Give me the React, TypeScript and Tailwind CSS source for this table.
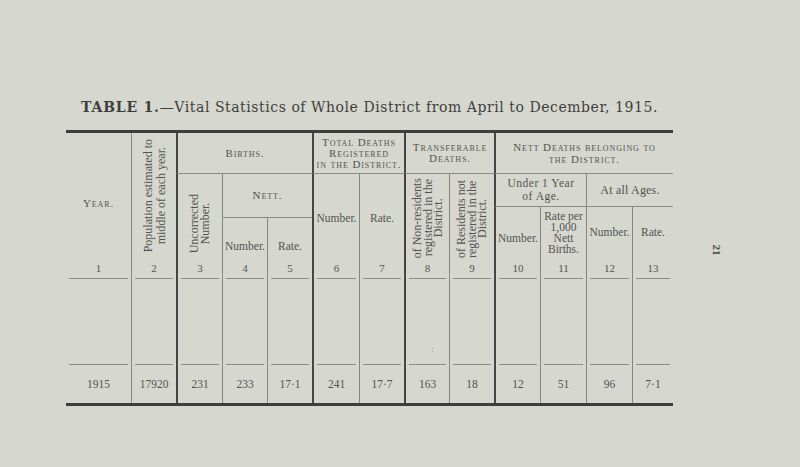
import * as React from "react";

const thin = "border-l border-l-[#868782]";
const thick = "border-l-2 border-l-[#454643]";
const rule = "h-px bg-[#8a8b86]";

const colLeft = [
  "",
  thin,
  thick,
  thin,
  thin,
  thick,
  thin,
  thick,
  thin,
  thick,
  thin,
  thin,
  thin,
];

const colStart = [
  "col-start-1",
  "col-start-2",
  "col-start-3",
  "col-start-4",
  "col-start-5",
  "col-start-6",
  "col-start-7",
  "col-start-8",
  "col-start-9",
  "col-start-10",
  "col-start-11",
  "col-start-12",
  "col-start-13",
];

const values = ["1915", "17920", "231", "233", "17·1", "241", "17·7", "163", "18", "12", "51", "96", "7·1"];

function Caps({ children, className = "" }: { children: React.ReactNode; className?: string }) {
  return (
    <div className={`text-center text-[11px] leading-[11px] tracking-[0.9px] [font-variant-caps:small-caps] ${className}`}>
      {children}
    </div>
  );
}

function Sideways({ children, className = "" }: { children: React.ReactNode; className?: string }) {
  return (
    <div className={`whitespace-nowrap text-center text-[12px] [writing-mode:vertical-rl] rotate-180 ${className}`}>
      {children}
    </div>
  );
}

export default function App() {
  return (
    <div className="flex h-[467px] w-full bg-[#d6d7cf] pl-[66px] pt-[97px] font-['Liberation_Serif',serif] text-[#52544f]">
      <div className="w-[607px]">
        <h1 className="mb-[13px] h-[20px] whitespace-nowrap text-center font-['DejaVu_Serif',serif] text-[14px] leading-[20px] tracking-[0.55px] text-[#3e3f3c]">
          <span className="font-bold tracking-[0.8px]">TABLE 1.</span>
          <span>—Vital Statistics of Whole District from April to December, 1915.</span>
        </h1>

        <div className="grid grid-cols-[65px_45px_46px_45px_45px_47px_45px_45px_45px_46px_46px_46px_41px] grid-rows-[41px_33px_11px_40px_21px_86px_38px] border-y-[3px] border-y-[#3c3d3a] text-[11.5px]">
          {/* header */}
          <div className="col-start-1 row-start-1 row-span-4 flex items-center justify-center pt-4">
            <Caps className="tracking-[0.5px]">Year.</Caps>
          </div>
          <div className={`col-start-2 row-start-1 row-span-4 flex items-center justify-center pl-[2px] ${thin}`}>
            <Sideways className="leading-[13px]">
              Population estimated to
              <br />
              middle of each year.
            </Sideways>
          </div>

          <div className={`col-start-3 col-span-3 row-start-1 flex items-center justify-center border-b border-b-[#8a8b86] ${thick}`}>
            <Caps>Births.</Caps>
          </div>
          <div className={`col-start-3 row-start-2 row-span-3 flex items-center justify-center pt-4 ${thick}`}>
            <Sideways className="leading-[11px]">
              Uncorrected
              <br />
              Number.
            </Sideways>
          </div>
          <div className={`col-start-4 col-span-2 row-start-2 row-span-2 flex items-center justify-center border-b border-b-[#8a8b86] ${thin}`}>
            <Caps>Nett.</Caps>
          </div>
          <div className={`col-start-4 row-start-4 flex items-end justify-center pb-[5px] leading-[13px] ${thin}`}>Number.</div>
          <div className={`col-start-5 row-start-4 flex items-end justify-center pb-[5px] leading-[13px] ${thin}`}>Rate.</div>

          <div className={`col-start-6 col-span-2 row-start-1 flex items-center justify-center border-b border-b-[#8a8b86] ${thick}`}>
            <Caps>
              Total Deaths
              <br />
              Registered
              <br />
              in the District.
            </Caps>
          </div>
          <div className={`col-start-6 row-start-2 row-span-3 flex items-center justify-center pt-[6px] ${thick}`}>Number.</div>
          <div className={`col-start-7 row-start-2 row-span-3 flex items-center justify-center pt-[6px] ${thin}`}>Rate.</div>

          <div className={`col-start-8 col-span-2 row-start-1 flex items-center justify-center border-b border-b-[#8a8b86] ${thick}`}>
            <Caps>
              Transferable
              <br />
              Deaths.
            </Caps>
          </div>
          <div className={`col-start-8 row-start-2 row-span-3 flex items-center justify-center pt-[5px] ${thick}`}>
            <Sideways className="leading-[10.5px]">
              of Non-residents
              <br />
              registered in the
              <br />
              District.
            </Sideways>
          </div>
          <div className={`col-start-9 row-start-2 row-span-3 flex items-center justify-center pt-[5px] ${thin}`}>
            <Sideways className="leading-[10.5px]">
              of Residents not
              <br />
              registered in the
              <br />
              District.
            </Sideways>
          </div>

          <div className={`col-start-10 col-span-4 row-start-1 flex items-center justify-center border-b border-b-[#8a8b86] ${thick}`}>
            <Caps className="leading-[12px]">
              Nett Deaths belonging to
              <br />
              the District.
            </Caps>
          </div>
          <div className={`col-start-10 col-span-2 row-start-2 flex items-center justify-center border-b border-b-[#8a8b86] text-center text-[11.5px] leading-[13.5px] tracking-[0.5px] ${thick}`}>
            Under 1 Year
            <br />
            of Age.
          </div>
          <div className={`col-start-12 col-span-2 row-start-2 flex items-center justify-center border-b border-b-[#8a8b86] text-[12px] tracking-[0.2px] ${thin}`}>
            At all Ages.
          </div>
          <div className={`col-start-10 row-start-3 row-span-2 flex items-center justify-center pt-[12px] ${thick}`}>Number.</div>
          <div className={`col-start-11 row-start-3 row-span-2 flex items-center justify-center text-center leading-[11px] ${thin}`}>
            Rate per
            <br />
            1,000
            <br />
            Nett
            <br />
            Births.
          </div>
          <div className={`col-start-12 row-start-3 row-span-2 flex items-center justify-center ${thin}`}>Number.</div>
          <div className={`col-start-13 row-start-3 row-span-2 flex items-center justify-center ${thin}`}>Rate.</div>

          {/* column numbers */}
          {values.map((_, i) => (
            <div key={`n${i}`} className={`row-start-5 flex flex-col justify-end ${colStart[i]} ${colLeft[i]}`}>
              <div className="text-center text-[11px] leading-[13px]">{i + 1}</div>
              <div className={`mx-[3px] mt-[3px] ${rule}`} />
            </div>
          ))}

          {/* empty body */}
          {values.map((_, i) => (
            <div key={`e${i}`} className={`row-start-6 flex flex-col items-center justify-end ${colStart[i]} ${colLeft[i]}`}>
              {i === 7 && <span className="mb-[10px] ml-[10px] text-[9px] leading-[9px] text-[#8a8b86]">:</span>}
              <div className={`mx-[3px] self-stretch ${rule}`} />
            </div>
          ))}

          {/* data */}
          {values.map((v, i) => (
            <div key={`d${i}`} className={`row-start-7 flex items-center justify-center pt-[2px] ${colStart[i]} ${colLeft[i]}`}>
              {v}
            </div>
          ))}
        </div>
      </div>

      <div className="ml-[38px] mt-[146px] h-[14px] rotate-90 text-[11px] font-bold leading-[14px] text-[#4a4b48]">21</div>
    </div>
  );
}
